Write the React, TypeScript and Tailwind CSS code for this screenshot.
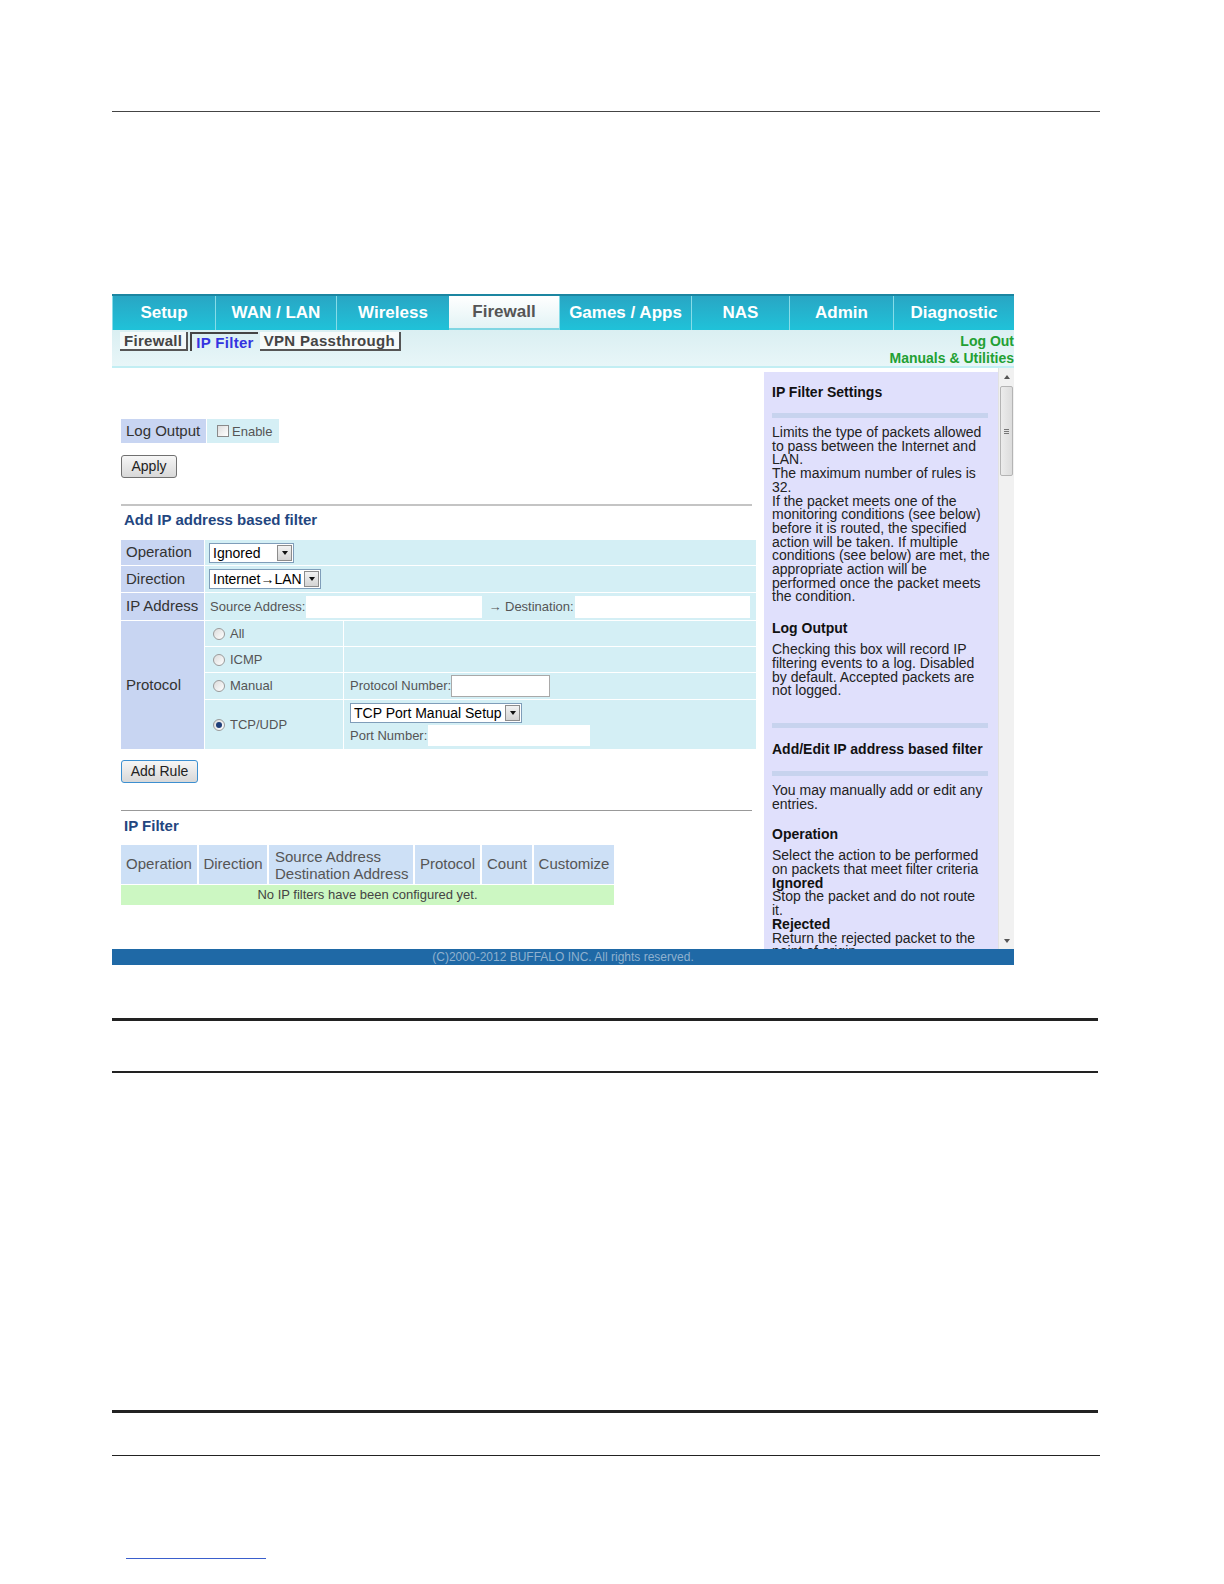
const tabs = [
  { label: 'Setup', w: 'w-[103px]' },
  { label: 'WAN / LAN', w: 'w-[121px]' },
  { label: 'Wireless', w: 'w-[113px]' },
  { label: 'Firewall', w: 'w-[110px]', active: true },
  { label: 'Games / Apps', w: 'w-[132px]' },
  { label: 'NAS', w: 'w-[98px]' },
  { label: 'Admin', w: 'w-[104px]' },
  { label: 'Diagnostic', w: 'w-[121px]' },
];

function DropButton() {
  return (
    <span className="flex items-center justify-center w-[15px] h-[16px] mr-[1px] bg-gradient-to-b from-[#f2f2f2] to-[#d4d4d4] border border-[#8c8c8c]">
      <span className="w-0 h-0 border-l-[3px] border-r-[3px] border-t-[4px] border-l-transparent border-r-transparent border-t-[#111]" />
    </span>
  );
}

function Select({ value, w }: { value: string; w: string }) {
  return (
    <div className={`${w} h-[20px] flex items-center justify-between bg-white border border-[#7f9db9] text-[14px] text-black`}>
      <span className="pl-[3px] leading-[18px] whitespace-nowrap">{value}</span>
      <DropButton />
    </div>
  );
}

function Radio({ checked }: { checked?: boolean }) {
  return (
    <span className="w-[12px] h-[12px] rounded-full border border-[#9a9a9a] bg-gradient-to-br from-[#dcdcdc] to-white flex items-center justify-center">
      {checked && <span className="w-[6px] h-[6px] rounded-full bg-[#1f3f7a]" />}
    </span>
  );
}

function RadioCell({ label, checked }: { label: string; checked?: boolean }) {
  return (
    <div className="bg-[#d4eff5] flex items-center gap-[5px] pl-[8px] text-[13px] text-[#555]">
      <Radio checked={checked} />
      <span>{label}</span>
    </div>
  );
}

function Button({ label, w, blue }: { label: string; w: string; blue?: boolean }) {
  return (
    <div
      className={`${w} h-[23px] flex items-center justify-center rounded-[3px] border ${
        blue ? 'border-[#3c8fd0]' : 'border-[#707070]'
      } bg-gradient-to-b from-[#f6f6f6] to-[#d8d8d8] text-[14px] text-[#222]`}
    >
      {label}
    </div>
  );
}

const helpLine = 'whitespace-nowrap';

export default function App() {
  return (
    <div className="w-[1224px] h-[1584px] bg-white overflow-hidden font-['Liberation_Sans',Arial,sans-serif]">
      <div className="pl-[112px] pt-[111px]">
        <div className="w-[988px] h-px bg-[#444]" />

        <div className="mt-[182px] w-[902px]">
          {/* top nav */}
          <div className="flex border-t-2 border-[#1c86a1] h-[36px]">
            {tabs.map(t => (
              <div
                key={t.label}
                className={`${t.w} h-[34px] flex items-center justify-center text-[17px] font-bold ${
                  t.active
                    ? 'bg-gradient-to-b from-white to-[#e2f3f5] text-[#555] border-b-2 border-[#7fd6e3]'
                    : 'bg-gradient-to-b from-[#28a6c4] to-[#1fc2d9] text-white border-l border-[#86dce8]'
                }`}
              >
                {t.label}
              </div>
            ))}
          </div>

          {/* sub nav */}
          <div className="h-[36px] flex justify-between bg-gradient-to-b from-[#daeff2] to-[#e8f6f8]">
            <div className="flex items-start pt-[2px] pl-[8px] text-[15px] tracking-[0.3px] font-bold leading-[17px]">
              <span className="px-[4px] bg-[#f3f9f9] text-[#444] border-r-2 border-b-2 border-[#555]">Firewall</span>
              <span className="ml-[2px] px-[4px] text-[#3434e0] border-l-2 border-t-2 border-[#444]">IP Filter</span>
              <span className="ml-[2px] px-[4px] bg-[#f6fafa] text-[#444] border-r-2 border-b-2 border-[#555]">VPN Passthrough</span>
            </div>
            <div className="flex flex-col items-end pt-[3px] text-[14px] font-bold leading-[17px] text-[#22a033]">
              <span>Log Out</span>
              <span>Manuals &amp; Utilities</span>
            </div>
          </div>
          <div className="h-[2px] bg-[#c2eef3]" />

          {/* main */}
          <div className="h-[581px] flex">
            {/* left column */}
            <div className="w-[652px] pl-[9px] text-[#333]">
              <div className="mt-[51px] flex h-[24px] gap-px">
                <div className="w-[85px] bg-[#c8d5f2] pl-[5px] text-[15px] leading-[24px]">Log Output</div>
                <div className="w-[72px] bg-[#d5eff5] flex items-center gap-[3px] pl-[10px] text-[13px] text-[#555]">
                  <span className="w-[12px] h-[12px] border border-[#8a8a8a] bg-gradient-to-br from-[#dedede] to-white" />
                  <span className="mt-[2px]">Enable</span>
                </div>
              </div>

              <div className="mt-[12px]">
                <Button label="Apply" w="w-[56px]" />
              </div>

              <div className="mt-[26px] w-[631px] h-[2px] bg-[#c4c4c4]" />

              <div className="mt-[5px] pl-[3px] h-[18px] text-[15px] leading-[18px] font-bold text-[#23467f]">
                Add IP address based filter
              </div>

              <div className="mt-[11px] w-[635px] grid grid-cols-[83px_138px_1fr] grid-rows-[25px_26px_27px_25px_25px_26px_49px] gap-px text-[15px]">
                <div className="bg-[#c8d5f2] pl-[5px] flex items-center">Operation</div>
                <div className="col-span-2 bg-[#d4eff5] flex items-center pl-[4px]">
                  <Select value="Ignored" w="w-[85px]" />
                </div>

                <div className="bg-[#c8d5f2] pl-[5px] flex items-center">Direction</div>
                <div className="col-span-2 bg-[#d4eff5] flex items-center pl-[4px]">
                  <Select value="Internet→LAN" w="w-[112px]" />
                </div>

                <div className="bg-[#c8d5f2] pl-[5px] flex items-center">IP Address</div>
                <div className="col-span-2 bg-[#d4eff5] flex items-center pl-[5px] text-[13px] text-[#555]">
                  <span>Source Address:</span>
                  <span className="ml-[1px] w-[176px] h-[22px] bg-white" />
                  <span className="ml-[6px]">→ Destination:</span>
                  <span className="ml-[1px] w-[175px] h-[22px] bg-white" />
                </div>

                <div className="row-span-4 bg-[#c8d5f2] pl-[5px] flex items-center">Protocol</div>
                <RadioCell label="All" />
                <div className="bg-[#d4eff5]" />
                <RadioCell label="ICMP" />
                <div className="bg-[#d4eff5]" />
                <RadioCell label="Manual" />
                <div className="bg-[#d4eff5] flex items-center pl-[6px] text-[13px] text-[#555]">
                  <span>Protocol Number:</span>
                  <span className="w-[99px] h-[22px] bg-white border border-[#a9a9a9]" />
                </div>
                <RadioCell label="TCP/UDP" checked />
                <div className="bg-[#d4eff5] flex flex-col pl-[6px] pt-[3px] text-[13px] text-[#555]">
                  <Select value="TCP Port Manual Setup" w="w-[172px]" />
                  <div className="flex items-center mt-[2px]">
                    <span>Port Number:</span>
                    <span className="ml-[1px] w-[162px] h-[21px] bg-white" />
                  </div>
                </div>
              </div>

              <div className="mt-[11px]">
                <Button label="Add Rule" w="w-[77px]" blue />
              </div>

              <div className="mt-[27px] w-[631px] h-px bg-[#999]" />

              <div className="mt-[6px] pl-[3px] h-[18px] text-[15px] leading-[18px] font-bold text-[#23467f]">IP Filter</div>

              <div className="mt-[10px] w-[493px] text-[15px] text-[#555]">
                <div className="flex gap-[2px] h-[39px]">
                  <div className="w-[76px] bg-[#cde0f6] flex items-center justify-center">Operation</div>
                  <div className="w-[68px] bg-[#cde0f6] flex items-center justify-center">Direction</div>
                  <div className="w-[144px] bg-[#cde0f6] flex flex-col justify-center pl-[6px] leading-[17px]">
                    <span>Source Address</span>
                    <span>Destination Address</span>
                  </div>
                  <div className="w-[65px] bg-[#cde0f6] flex items-center justify-center">Protocol</div>
                  <div className="w-[50px] bg-[#cde0f6] flex items-center justify-center">Count</div>
                  <div className="flex-1 bg-[#cde0f6] flex items-center justify-center">Customize</div>
                </div>
                <div className="mt-px h-[20px] bg-[#ccf7c2] text-center text-[13px] leading-[20px] text-[#444]">
                  No IP filters have been configured yet.
                </div>
              </div>
            </div>

            {/* help panel */}
            <div className="w-[234px] mt-[4px] bg-[#e0e0fc] overflow-hidden pl-[8px] pr-[4px] text-[14px] leading-[13.7px] text-[#222]">
              <div className="mt-[12px] text-[14px] leading-[17px] font-bold text-[#111]">IP Filter Settings</div>
              <div className="mt-[12px] mr-[6px] h-[5px] bg-[#c7d3ee]" />
              <div className="mt-[8px]">
                <div className={helpLine}>Limits the type of packets allowed</div>
                <div className={helpLine}>to pass between the Internet and</div>
                <div className={helpLine}>LAN.</div>
                <div className={helpLine}>The maximum number of rules is</div>
                <div className={helpLine}>32.</div>
                <div className={helpLine}>If the packet meets one of the</div>
                <div className={helpLine}>monitoring conditions (see below)</div>
                <div className={helpLine}>before it is routed, the specified</div>
                <div className={helpLine}>action will be taken. If multiple</div>
                <div className={helpLine}>conditions (see below) are met, the</div>
                <div className={helpLine}>appropriate action will be</div>
                <div className={helpLine}>performed once the packet meets</div>
                <div className={helpLine}>the condition.</div>
              </div>
              <div className="mt-[16px] text-[14px] leading-[17px] font-bold text-[#111]">Log Output</div>
              <div className="mt-[6px]">
                <div className={helpLine}>Checking this box will record IP</div>
                <div className={helpLine}>filtering events to a log. Disabled</div>
                <div className={helpLine}>by default. Accepted packets are</div>
                <div className={helpLine}>not logged.</div>
              </div>
              <div className="mt-[25px] mr-[6px] h-[5px] bg-[#c7d3ee]" />
              <div className="mt-[13px] text-[14px] leading-[17px] font-bold text-[#111] whitespace-nowrap">
                Add/Edit IP address based filter
              </div>
              <div className="mt-[13px] mr-[6px] h-[5px] bg-[#c7d3ee]" />
              <div className="mt-[8px]">
                <div className={helpLine}>You may manually add or edit any</div>
                <div className={helpLine}>entries.</div>
              </div>
              <div className="mt-[15px] text-[14px] leading-[17px] font-bold text-[#111]">Operation</div>
              <div className="mt-[6px]">
                <div className={helpLine}>Select the action to be performed</div>
                <div className={helpLine}>on packets that meet filter criteria</div>
                <div className={`${helpLine} font-bold text-[#111]`}>Ignored</div>
                <div className={helpLine}>Stop the packet and do not route</div>
                <div className={helpLine}>it.</div>
                <div className={`${helpLine} font-bold text-[#111]`}>Rejected</div>
                <div className={helpLine}>Return the rejected packet to the</div>
                <div className={helpLine}>point of origin.</div>
              </div>
            </div>

            {/* scrollbar */}
            <div className="w-[16px] bg-[#f1f1f1] border-l border-[#e2e2e2] flex flex-col items-center">
              <span className="mt-[7px] w-0 h-0 border-l-[3px] border-r-[3px] border-b-[4px] border-l-transparent border-r-transparent border-b-[#555]" />
              <div className="mt-[7px] w-[13px] h-[90px] rounded-[2px] border border-[#b4b4b4] bg-gradient-to-r from-[#ececec] to-[#dcdcdc] flex flex-col items-center justify-center gap-px">
                <span className="w-[5px] h-px bg-[#777]" />
                <span className="w-[5px] h-px bg-[#777]" />
                <span className="w-[5px] h-px bg-[#777]" />
              </div>
              <span className="mt-auto mb-[6px] w-0 h-0 border-l-[3px] border-r-[3px] border-t-[4px] border-l-transparent border-r-transparent border-t-[#555]" />
            </div>
          </div>

          {/* footer */}
          <div className="h-[16px] bg-[#1f69a6] text-center text-[12px] leading-[16px] text-[#8fb1cf]">
            (C)2000-2012 BUFFALO INC. All rights reserved.
          </div>
        </div>

        <div className="mt-[53px] w-[986px] h-[3px] bg-[#222]" />
        <div className="mt-[50px] w-[986px] h-[2px] bg-[#222]" />
        <div className="mt-[337px] w-[986px] h-[3px] bg-[#222]" />
        <div className="mt-[42px] w-[988px] h-px bg-[#222]" />
        <div className="mt-[102px] ml-[14px] w-[140px] h-px bg-[#3a5fcd]" />
      </div>
    </div>
  );
}
